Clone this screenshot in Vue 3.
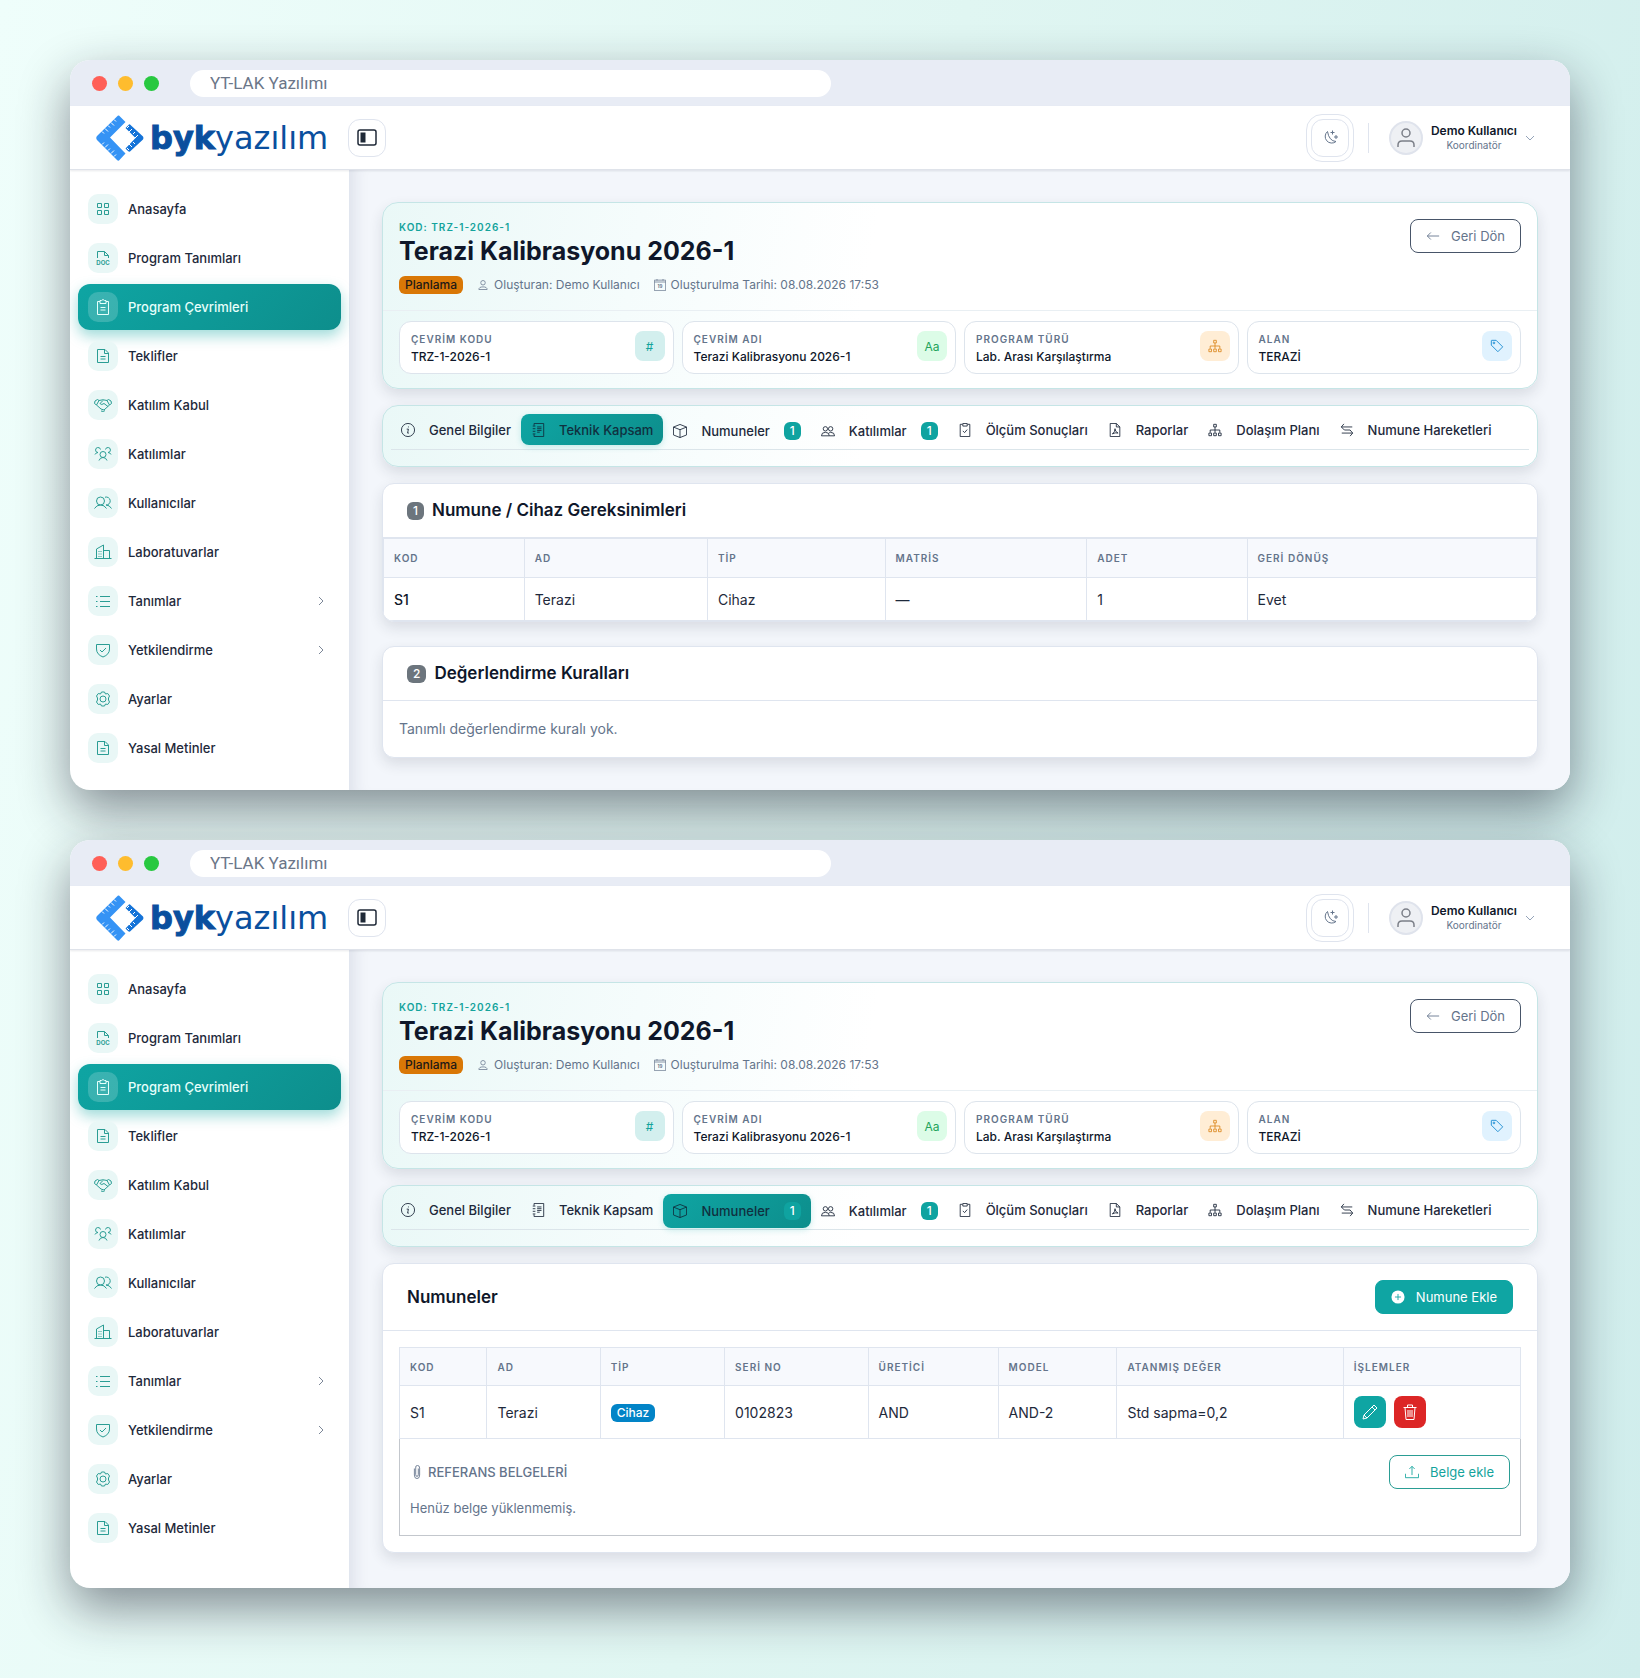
<template>
  <div class="page">
    <section v-for="win in windows" :key="win.tab" class="window" :class="{ tall: win.tab === 'Numuneler' }">
      <div class="titlebar">
        <span class="dot red"></span>
        <span class="dot yellow"></span>
        <span class="dot green"></span>
        <input class="address" type="text" value="YT-LAK Yazılımı" aria-label="Adres" readonly />
      </div>

      <header class="topbar">
        <a href="#" class="logo">
          <svg width="48" height="46" viewBox="0 0 48 46">
            <path fill="#3593f5" stroke="none" d="M23 0.5L29.5 7L14 22.5L29.5 38.5L23 45.5Q22 46 21 45L1 25Q-0.500 23 1 21L21 1.5Q22 0 23 0.5Z" />
            <path fill="#1473d8" stroke="none" d="M34 9.5L47 21.5Q48 23 47 24.5L34 36.5Q33 37 32 36L29.5 33.5L39.5 23L29.5 13L32.5 10Q33 9 34 9.5Z" />
            <path stroke="#fff" stroke-width="1" fill="none" d="M6 16.5L8 18.5M9 13.5L12 16.5M12 10.5L14 12.5M15 7.5L18 10.5M18 4.5L20 6.5M6 29.5L8 27.5M9 32.5L12 29.5M12 35.5L14 33.5M15 38.5L18 35.5M18 41.5L20 39.5M33 11L31 13M36 14L33 17M39 17L37 19M42 20L39 23M33 35L31 33M36 32L33 29M39 29L37 27" />
          </svg>
          <span class="logo-bold">byk</span><span>yazılım</span>
        </a>
        <button class="square" aria-label="Menüyü daralt">
          <svg class="icon-20" viewBox="0 0 20 20">
            <rect x="1" y="2" width="18" height="15" rx="2" stroke-width="1.5" />
            <rect x="4" y="5" width="4" height="9" fill="#1f2937" />
          </svg>
        </button>
        <div class="user-area">
          <div class="theme">
            <button class="square muted" aria-label="Koyu tema">
              <svg class="icon-18" viewBox="0 0 18 18"><path :d="icons.moon" /></svg>
            </button>
          </div>
          <span class="separator"></span>
          <button class="user">
            <span class="avatar">
              <svg class="icon-20" viewBox="0 0 20 20"><path stroke-width="1.5" :d="icons.avatar" /></svg>
            </span>
            <span class="user-text">
              <strong>Demo Kullanıcı</strong>
              <small>Koordinatör</small>
            </span>
            <svg class="caret" viewBox="0 0 10 10"><path d="M1 3L5 7L9 3" /></svg>
          </button>
        </div>
      </header>

      <div class="body">
        <nav class="sidebar">
          <a v-for="item in menu" :key="item.text" href="#" class="menu-item" :class="{ active: item.active }">
            <span class="menu-icon">
              <svg class="icon-18" viewBox="0 0 18 18">
                <path :d="icons[item.icon]" />
                <text v-if="item.icon === 'doc'" x="9" y="16" class="doc-text">DOC</text>
              </svg>
            </span>
            <span>{{ item.text }}</span>
            <svg v-if="item.arrow" class="menu-arrow" viewBox="0 0 10 10"><path d="M3 1L7 5L3 9" /></svg>
          </a>
        </nav>

        <main class="content">
          <div class="card hero">
            <div class="hero-top">
              <div>
                <div class="code">KOD: TRZ-1-2026-1</div>
                <h1>Terazi Kalibrasyonu 2026-1</h1>
                <div class="meta">
                  <span class="badge orange">Planlama</span>
                  <span class="meta-item">
                    <svg class="icon-12" viewBox="0 0 16 16"><path :d="icons.person" /></svg>
                    Oluşturan: Demo Kullanıcı
                  </span>
                  <span class="meta-item">
                    <svg class="icon-12" viewBox="0 0 16 16">
                      <path d="M0.5 1.5H15.5V15.5H0.5ZM0.5 4H15.5M4 0V2M12 0V2" />
                      <text x="8" y="12" class="cal-text">19</text>
                    </svg>
                    Oluşturulma Tarihi: 08.08.2026 17:53
                  </span>
                </div>
              </div>
              <button class="btn outline-gray">
                <svg class="icon-14" viewBox="0 0 16 16"><path d="M15 8H1.5M5.5 4L1.5 8L5.5 12" /></svg>
                Geri Dön
              </button>
            </div>
            <div class="stats">
              <div v-for="stat in stats" :key="stat.label" class="stat">
                <div>
                  <div class="stat-label">{{ stat.label }}</div>
                  <div class="stat-value">{{ stat.value }}</div>
                </div>
                <span class="stat-icon" :class="stat.color">
                  <template v-if="stat.glyph">{{ stat.glyph }}</template>
                  <svg v-else class="icon-14" viewBox="0 0 16 16"><path :d="icons[stat.icon]" /></svg>
                </span>
              </div>
            </div>
          </div>

          <div class="card tabs-card">
            <div class="tabs">
              <button v-for="tab in tabs" :key="tab.text" class="tab" :class="{ active: tab.text === win.tab }">
                <svg class="icon-14" viewBox="0 0 16 16"><path :d="icons[tab.icon]" /></svg>
                {{ tab.text }}
                <span v-if="tab.count" class="badge teal">{{ tab.count }}</span>
              </button>
            </div>
          </div>

          <template v-if="win.tab === 'Teknik Kapsam'">
            <div class="card requirements">
              <div class="card-header">
                <h2><span class="badge gray">1</span>Numune / Cihaz Gereksinimleri</h2>
              </div>
              <table class="req-table">
                <thead>
                  <tr>
                    <th>KOD</th>
                    <th>AD</th>
                    <th>TİP</th>
                    <th>MATRİS</th>
                    <th>ADET</th>
                    <th>GERİ DÖNÜŞ</th>
                  </tr>
                </thead>
                <tbody>
                  <tr>
                    <td class="strong">S1</td>
                    <td>Terazi</td>
                    <td>Cihaz</td>
                    <td>—</td>
                    <td>1</td>
                    <td>Evet</td>
                  </tr>
                </tbody>
              </table>
            </div>

            <div class="card">
              <div class="card-header">
                <h2><span class="badge gray">2</span>Değerlendirme Kuralları</h2>
              </div>
              <p class="empty">Tanımlı değerlendirme kuralı yok.</p>
            </div>
          </template>

          <div v-else class="card">
            <div class="card-header">
              <h2>Numuneler</h2>
              <button class="btn primary">
                <svg class="icon-14" viewBox="0 0 16 16">
                  <circle cx="8" cy="8" r="7.5" fill="#fff" stroke="none" />
                  <path class="plus" d="M8 4.5V11.5M4.5 8H11.5" />
                </svg>
                Numune Ekle
              </button>
            </div>
            <div class="card-body">
              <table class="sample-table">
                <thead>
                  <tr>
                    <th>KOD</th>
                    <th>AD</th>
                    <th>TİP</th>
                    <th>SERİ NO</th>
                    <th>ÜRETİCİ</th>
                    <th>MODEL</th>
                    <th>ATANMIŞ DEĞER</th>
                    <th>İŞLEMLER</th>
                  </tr>
                </thead>
                <tbody>
                  <tr>
                    <td>S1</td>
                    <td>Terazi</td>
                    <td><span class="badge blue">Cihaz</span></td>
                    <td>0102823</td>
                    <td>AND</td>
                    <td>AND-2</td>
                    <td>Std sapma=0,2</td>
                    <td>
                      <div class="actions">
                        <button class="action edit" aria-label="Düzenle">
                          <svg class="icon-16" viewBox="0 0 16 16"><path :d="icons.pencil" /></svg>
                        </button>
                        <button class="action delete" aria-label="Sil">
                          <svg class="icon-16" viewBox="0 0 16 16"><path :d="icons.trash" /></svg>
                        </button>
                      </div>
                    </td>
                  </tr>
                  <tr class="docs">
                    <td colspan="8">
                      <div class="docs-head">
                        <span class="docs-title">
                          <svg class="icon-14" viewBox="0 0 16 16"><path :d="icons.clip" /></svg>
                          REFERANS BELGELERİ
                        </span>
                        <button class="btn outline-teal">
                          <svg class="icon-14" viewBox="0 0 16 16"><path :d="icons.upload" /></svg>
                          Belge ekle
                        </button>
                      </div>
                      <div class="docs-empty">Henüz belge yüklenmemiş.</div>
                    </td>
                  </tr>
                </tbody>
              </table>
            </div>
          </div>
        </main>
      </div>
    </section>
  </div>
</template>

<script setup>
const windows = [{ tab: "Teknik Kapsam" }, { tab: "Numuneler" }]

const menu = [
  { text: "Anasayfa", icon: "grid" },
  { text: "Program Tanımları", icon: "doc" },
  { text: "Program Çevrimleri", icon: "clipboard", active: true },
  { text: "Teklifler", icon: "file" },
  { text: "Katılım Kabul", icon: "handshake" },
  { text: "Katılımlar", icon: "group" },
  { text: "Kullanıcılar", icon: "users" },
  { text: "Laboratuvarlar", icon: "building" },
  { text: "Tanımlar", icon: "list", arrow: true },
  { text: "Yetkilendirme", icon: "shield", arrow: true },
  { text: "Ayarlar", icon: "gear" },
  { text: "Yasal Metinler", icon: "file" },
]

const stats = [
  { label: "ÇEVRİM KODU", value: "TRZ-1-2026-1", glyph: "#", color: "c-teal" },
  { label: "ÇEVRİM ADI", value: "Terazi Kalibrasyonu 2026-1", glyph: "Aa", color: "c-green" },
  { label: "PROGRAM TÜRÜ", value: "Lab. Arası Karşılaştırma", icon: "diagram", color: "c-orange" },
  { label: "ALAN", value: "TERAZİ", icon: "tag", color: "c-blue" },
]

const tabs = [
  { text: "Genel Bilgiler", icon: "info" },
  { text: "Teknik Kapsam", icon: "journal" },
  { text: "Numuneler", icon: "box", count: 1 },
  { text: "Katılımlar", icon: "people", count: 1 },
  { text: "Ölçüm Sonuçları", icon: "check" },
  { text: "Raporlar", icon: "pdf" },
  { text: "Dolaşım Planı", icon: "diagram" },
  { text: "Numune Hareketleri", icon: "swap" },
]

const icons = {
  // sidebar, 18x18
  grid: "M3.5 3.5H7.5V7.5H3.5ZM10.5 3.5H14.5V7.5H10.5ZM3.5 10.5H7.5V14.5H3.5ZM10.5 10.5H14.5V14.5H10.5Z",
  doc: "M3.5 9V2.5H10.5L14.5 6.5V9M10.5 2.5V6.5H14.5",
  clipboard: "M6 3.5H3.5V16.5H14.5V3.5H12M6 2.5H7.5Q9 0.5 10.5 2.5H12V5.5H6ZM6.5 9.5H11.5M6.5 12H11.5",
  file: "M3.5 2.5H11L14.5 6V15.5H3.5ZM10.5 2.5V6.5H14.5M6.5 9.5H11.5M6.5 12H11.5",
  handshake: "M1 5L3.5 3.5L5 4.5L2.5 9L0.5 7.5ZM17 5L14.5 3.5L13 4.5L15.5 9L17.5 7.5ZM5 4.5Q9 3 13 4.5M2.5 9L7 13L10 14L15.5 9M9 4.5L6 7.5Q7.5 9.5 10 7.5L14 10.5M7 15L9.5 15.5L11 14.5",
  group: "M9 12.5A3 3 0 1 0 9 6.5A3 3 0 0 0 9 12.5M5 15.5Q6 12.5 9 12.5T13 15.5M6.5 4.5A2.500 2.500 0 1 0 4 7.5M11.5 4.5A2.500 2.500 0 1 1 14 7.5M4 7.5Q2 7.5 1 9.5M14 7.5Q16 7.5 17 9.5",
  users: "M6.5 11A4 4 0 1 0 6.5 3A4 4 0 0 0 6.5 11M0.5 14.5Q2.5 11 6.5 11T12.5 14.5M11 3.2A4 4 0 1 1 12 11Q15.5 11 17.5 14.5",
  building: "M0.5 15.5H17.5M2.5 15.5V6L9.5 2V15.5M9.5 7.5H15.5V15.5M5 8V9M7 8V9M5 10.5V11.5M7 10.5V11.5M5 13V14M7 13V14",
  list: "M6 4.5H16M6 9.5H16M6 14.5H16M2 4.5H3.5M2 9.5H3.5M2 14.5H3.5",
  shield: "M2.5 3.5H15.5V8Q15.5 13.5 9 16Q2.5 13.5 2.5 8ZM6 9L8 11L12 7",
  gear: "M9 12A3 3 0 1 0 9 6A3 3 0 0 0 9 12M7.5 2H10.5L11.5 4L13.7 3.5L15.5 6L14.5 8V10L15.5 12L13.7 14.5L11.5 14L10.5 16H7.5L6.5 14L4.3 14.5L2.5 12L3.5 10V8L2.5 6L4.3 3.5L6.5 4Z",
  moon: "M6.5 2.5A6.5 6.5 0 1 0 15 12.5Q8 12 6.5 2.5M11.5 1.5V5.5M9.5 3.5H13.5M15 6V10M13 8H17",
  avatar: "M10 9A4 4 0 1 0 10 1A4 4 0 0 0 10 9M2 19V17Q2 13 6 13H14Q18 13 18 17V19",

  // the rest, 16x16
  person: "M8 8A3 3 0 1 0 8 2A3 3 0 0 0 8 8M2.5 14Q2.5 10.5 8 10.5T13.5 14Z",
  diagram: "M6.5 1.5H9.5V4.5H6.5ZM8 4.5V11M2.5 11V8H13.5V11M1 11.5H4V14.5H1ZM6.5 11.5H9.5V14.5H6.5ZM12 11.5H15V14.5H12Z",
  tag: "M1.5 2Q1.5 1.5 2 1.5H7L14.5 9L9 14.5L1.5 7ZM4.5 5.5A1 1 0 1 0 4.5 3.5A1 1 0 0 0 4.5 5.5",
  info: "M8 15.5A7.5 7.5 0 1 0 8 0.5A7.5 7.5 0 0 0 8 15.5M6.5 7H8.5L7.5 11.5H9M8.5 4V5",
  journal: "M3.5 3V0.5H14.5V15.5H3.5V13M2 3.5H5M2 6.5H5M2 9.5H5M2 12.5H5M7 4.5H12M7 6.5H12M7 8.5H12M7 10.5H10",
  box: "M8 0.5L15.5 3.5V12.5L8 15.5L0.5 12.5V3.5ZM0.5 3.5L8 6.5L15.5 3.5M8 6.5V15.5",
  people: "M5 8A2.5 2.5 0 1 0 5 3A2.5 2.5 0 0 0 5 8M11 8A2.5 2.5 0 1 0 11 3A2.5 2.5 0 0 0 11 8M0.5 13.5Q0.5 9.5 5 9.5T9.5 13.5ZM9 10.5Q10 9.5 11 9.5Q15.5 9.5 15.5 13.5H9.5",
  check: "M5 1.5H2.5V15.5H13.5V1.5H11M5.5 0.5H10.5V3.5H5.5ZM5.5 9L7.5 11L10.5 7.5",
  pdf: "M2.5 0.5H9.5L13.5 4.5V15.5H2.5ZM9.5 0.5V4.5H13.5M5 12.5Q8 10.5 8 6.5Q8 10 11.5 11.5Q8 10.5 5 12.5",
  swap: "M14 4.5H1.5M4.5 1L1.5 4.5L5 8H11.5L14.500 11.5L11.5 15M2 11.5H14.5",
  pencil: "M12 1L15 4L5 14L1 15L2 11ZM10 3L13 6M2 11L5 14",
  trash: "M1.5 3.5H14.5M5.5 3.5V1H10.5V3.5M3 3.5L4 15.5H12L13 3.5M6 6V13M8 6V13M10 6V13",
  clip: "M5 4V11.5Q5 15.5 8 15.5T11 11.5V3.5Q11 0.5 8.500 0.5T6.5 3.5V11Q6.5 13 8 13T9.5 11V4",
  upload: "M0.5 10V14.5H15.5V10M8 11.5V1.5M5 4.5L8 1.5L11 4.5",
}
</script>

<style>
body {
  background: linear-gradient(100deg, #effefb 0%, #e0f6f2 50%, #d0edec 100%);
}
</style>

<style scoped>
* {
  box-sizing: border-box;
}

.page {
  padding: 60px 70px 90px;
  display: flex;
  flex-direction: column;
  gap: 50px;
  font-family: Inter, "Noto Sans", sans-serif;
  font-size: 13px;
  color: #1e293b;
}

button {
  font-family: inherit;
  font-size: 13px;
  cursor: pointer;
}

a {
  text-decoration: none;
}

svg {
  flex-shrink: 0;
  fill: none;
  stroke: currentColor;
}

.icon-12 {
  width: 12px;
  height: 12px;
}

.icon-14 {
  width: 14px;
  height: 14px;
}

.icon-16 {
  width: 16px;
  height: 16px;
}

.icon-18 {
  width: 18px;
  height: 18px;
}

.icon-20 {
  width: 20px;
  height: 20px;
}

.window {
  min-height: 730px;
  display: flex;
  flex-direction: column;
  border-radius: 20px;
  overflow: hidden;
  background: #fff;
  box-shadow: 0 20px 50px rgba(20, 24, 40, 0.48);
}

.window.tall {
  min-height: 748px;
}

.titlebar {
  height: 46px;
  padding: 0 22px;
  display: flex;
  align-items: center;
  gap: 11px;
  background: #e8ecf5;
}

.dot {
  width: 15px;
  height: 15px;
  border-radius: 50%;
}

.red {
  background: #ff5f57;
}

.yellow {
  background: #febc2e;
}

.green {
  background: #28c840;
}

.address {
  width: 44%;
  height: 27px;
  margin-left: 20px;
  padding: 0 20px;
  border: none;
  border-radius: 14px;
  background: #fff;
  color: #6b7688;
  font-family: Roboto, sans-serif;
  font-size: 17px;
}

/* top bar */
.topbar {
  height: 64px;
  padding: 0 35px 0 26px;
  display: flex;
  align-items: center;
  border-bottom: 1px solid #dfe3ea;
  box-shadow: 0 1px 2px rgba(30, 41, 59, 0.1);
  z-index: 1;
}

.logo {
  width: 252px;
  display: flex;
  align-items: center;
  color: #0a4f9e;
  font-family: "DejaVu Sans", sans-serif;
  font-size: 32px;
  line-height: 36px;
}

.logo svg {
  margin-right: 6px;
}

.logo-bold {
  font-weight: 700;
  -webkit-text-stroke: 1px #0a4f9e;
}

.square {
  width: 38px;
  height: 38px;
  padding: 0;
  display: flex;
  align-items: center;
  justify-content: center;
  border: 1px solid #dfe4ee;
  border-radius: 12px;
  background: #fff;
  color: #1f2937;
}

.square.muted {
  color: #64748b;
}

.user-area {
  margin-left: auto;
  display: flex;
  align-items: center;
}

.theme {
  padding: 4px;
  border: 1px solid #dfe4ee;
  border-radius: 16px;
}

.separator {
  width: 1px;
  height: 30px;
  margin: 0 20px 0 14px;
  background: #dfe4ee;
}

.user {
  padding: 0;
  display: flex;
  align-items: center;
  gap: 8px;
  border: none;
  background: none;
}

.avatar {
  width: 34px;
  height: 34px;
  display: flex;
  align-items: center;
  justify-content: center;
  border: 2px solid #dfe3ec;
  border-radius: 50%;
  background: #eef0f4;
  color: #7b7f88;
}

.user-text {
  display: flex;
  flex-direction: column;
  align-items: center;
}

.user-text strong {
  font-size: 12px;
  line-height: 15px;
  font-weight: 600;
  color: #0f172a;
}

.user-text small {
  font-size: 10px;
  line-height: 14px;
  color: #64748b;
}

.caret {
  width: 10px;
  height: 10px;
  color: #94a3b8;
}

.body {
  flex: 1;
  display: flex;
}

/* sidebar */
.sidebar {
  width: 280px;
  flex-shrink: 0;
  padding: 16px 8px;
  display: flex;
  flex-direction: column;
  gap: 3px;
  border-right: 1px solid #e1e6ef;
}

.menu-item {
  height: 46px;
  padding: 0 15px 0 10px;
  display: flex;
  align-items: center;
  gap: 10px;
  border-radius: 12px;
  color: #1e293b;
  font-weight: 500;
}

.menu-item.active {
  background: linear-gradient(135deg, #0fa5a3, #0d8e8c);
  color: #e6fffb;
  box-shadow: 0 6px 14px rgba(14, 165, 160, 0.4);
}

.menu-icon {
  width: 30px;
  height: 30px;
  display: flex;
  align-items: center;
  justify-content: center;
  border-radius: 10px;
  background: #e9f7f6;
  color: #2a9d94;
}

.active .menu-icon {
  background: rgba(255, 255, 255, 0.18);
  color: #e6fffb;
}

.menu-arrow {
  width: 10px;
  height: 10px;
  margin-left: auto;
  color: #7c8798;
}

.doc-text,
.cal-text {
  stroke: none;
  fill: currentColor;
  font-size: 6px;
  font-weight: 700;
  text-anchor: middle;
}

/* content */
.content {
  flex: 1;
  min-width: 0;
  padding: 32px;
  background: #f3f6fb;
  box-shadow: inset 16px 0 16px -12px rgba(30, 41, 80, 0.1);
}

.card {
  margin-bottom: 16px;
  border: 1px solid #dfe5ef;
  border-radius: 12px;
  background: #fff;
  box-shadow: 0 6px 14px rgba(30, 41, 59, 0.12);
}

.card:last-child {
  margin-bottom: 0;
}

.hero,
.tabs-card {
  border-color: #c5e5e6;
  border-radius: 16px;
  background: linear-gradient(100deg, #eaf8f7 0%, #f5fcfc 22%, #fff 42%);
}

.hero-top {
  padding: 16px;
  display: flex;
  justify-content: space-between;
  align-items: flex-start;
  border-bottom: 1px solid #e9eff3;
}

.code {
  font-size: 10px;
  line-height: 16px;
  font-weight: 600;
  letter-spacing: 1px;
  color: #14a39c;
}

h1 {
  margin: 0 0 8px;
  font-size: 25px;
  line-height: 33px;
  font-weight: 700;
  color: #0f172a;
}

.meta {
  display: flex;
  align-items: center;
  gap: 14px;
  font-size: 12px;
  line-height: 18px;
  color: #64748b;
}

.meta-item {
  display: flex;
  align-items: center;
  gap: 5px;
}

.badge {
  display: inline-block;
  padding: 0 6px;
  border-radius: 6px;
  font-size: 12px;
  line-height: 18px;
  font-weight: 500;
}

.orange {
  background: #d97706;
  color: #1c1917;
}

.teal {
  background: #0fa3a0;
  color: #fff;
}

.gray {
  background: #6c757d;
  color: #fff;
}

.blue {
  background: #0284c7;
  color: #fff;
}

.btn {
  height: 34px;
  padding: 0 15px;
  display: flex;
  align-items: center;
  gap: 11px;
  border: 1px solid;
  border-radius: 8px;
}

.outline-gray {
  border-color: #475569;
  background: #fff;
  color: #64748b;
}

.outline-teal {
  border-color: #2a9d94;
  background: #fff;
  color: #14a39c;
}

.primary {
  border-color: #0fa5a3;
  background: #0fa5a3;
  color: #fff;
}

.plus {
  stroke: #0fa5a3;
}

.stats {
  padding: 10px 16px 14px;
  display: grid;
  grid-template-columns: repeat(4, 1fr);
  gap: 8px;
}

.stat {
  padding: 9px 8px 8px 11px;
  display: flex;
  justify-content: space-between;
  border: 1px solid #dde4ec;
  border-radius: 12px;
  background: #fff;
}

.stat-label {
  font-size: 10px;
  line-height: 17px;
  font-weight: 600;
  letter-spacing: 1px;
  color: #64748b;
}

.stat-value {
  font-size: 12px;
  line-height: 17px;
  font-weight: 500;
  color: #0f172a;
}

.stat-icon {
  width: 30px;
  height: 30px;
  display: flex;
  align-items: center;
  justify-content: center;
  border-radius: 8px;
  font-size: 12px;
}

.c-teal {
  background: #d3efee;
  color: #14a39c;
}

.c-green {
  background: #dcfce7;
  color: #22a35a;
}

.c-orange {
  background: #ffedd5;
  color: #dd8a24;
}

.c-blue {
  background: #e0f2fe;
  color: #1488d0;
}

.tabs-card {
  padding: 8px 8px 16px;
}

.tabs {
  padding-bottom: 1px;
  display: flex;
  align-items: flex-start;
  border-bottom: 1px solid #dbe5ea;
}

.tab {
  height: 31px;
  padding: 0 10px;
  display: flex;
  align-items: center;
  gap: 14px;
  border: none;
  border-radius: 8px;
  background: none;
  color: #1e293b;
  font-weight: 500;
  white-space: nowrap;
}

.tab:has(.badge) {
  height: 34px;
}

.tab.active {
  background: linear-gradient(135deg, #0fa5a3, #0d8e8c);
  color: #10303f;
  box-shadow: 0 2px 6px rgba(14, 165, 160, 0.2);
}

.card-header {
  padding: 16px 24px;
  display: flex;
  align-items: center;
  justify-content: space-between;
  border-bottom: 1px solid #dfe5ef;
}

h2 {
  margin: 0;
  display: flex;
  align-items: center;
  gap: 8px;
  font-size: 17px;
  line-height: 21px;
  font-weight: 600;
  color: #0f172a;
}

/* tables */
.requirements {
  margin-bottom: 24px;
  overflow: hidden;
}

table {
  width: 100%;
  border-collapse: collapse;
  table-layout: fixed;
}

th,
td {
  padding: 0 10px;
  border: 1px solid #dfe5ef;
  text-align: left;
}

th {
  height: 38px;
  background: #f7f9fd;
  font-size: 10px;
  font-weight: 600;
  letter-spacing: 1px;
  color: #64748b;
}

td {
  height: 43px;
  font-size: 14px;
}

.strong {
  font-weight: 500;
  color: #0f172a;
}

.req-table th {
  height: 39px;
}

.req-table th:nth-child(1) { width: 12.2%; }
.req-table th:nth-child(2) { width: 15.9%; }
.req-table th:nth-child(3) { width: 15.4%; }
.req-table th:nth-child(4) { width: 17.5%; }
.req-table th:nth-child(5) { width: 13.9%; }

.sample-table th:nth-child(1) { width: 7.8%; }
.sample-table th:nth-child(2) { width: 10.1%; }
.sample-table th:nth-child(3) { width: 11.1%; }
.sample-table th:nth-child(4) { width: 12.8%; }
.sample-table th:nth-child(5) { width: 11.6%; }
.sample-table th:nth-child(6) { width: 10.6%; }
.sample-table th:nth-child(7) { width: 20.2%; }

.sample-table td {
  height: 53px;
}

.empty {
  margin: 0;
  padding: 16px;
  font-size: 14px;
  line-height: 24px;
  color: #64748b;
}

.card-body {
  padding: 16px;
}

.actions {
  display: flex;
  gap: 8px;
}

.action {
  width: 32px;
  height: 32px;
  padding: 0;
  display: flex;
  align-items: center;
  justify-content: center;
  border: none;
  border-radius: 8px;
  color: #fff;
}

.edit {
  background: #0fa5a3;
}

.delete {
  background: #dc2626;
}

.docs td {
  padding: 16px 10px;
  border: 1px solid #c3c7cd;
  border-top-color: #e9eff3;
  font-size: 13px;
}

.docs-head {
  display: flex;
  align-items: center;
  justify-content: space-between;
}

.docs-title {
  display: flex;
  align-items: center;
  gap: 4px;
  font-weight: 500;
  color: #64748b;
}

.docs-empty {
  padding-top: 8px;
  line-height: 22px;
  color: #64748b;
}
</style>
